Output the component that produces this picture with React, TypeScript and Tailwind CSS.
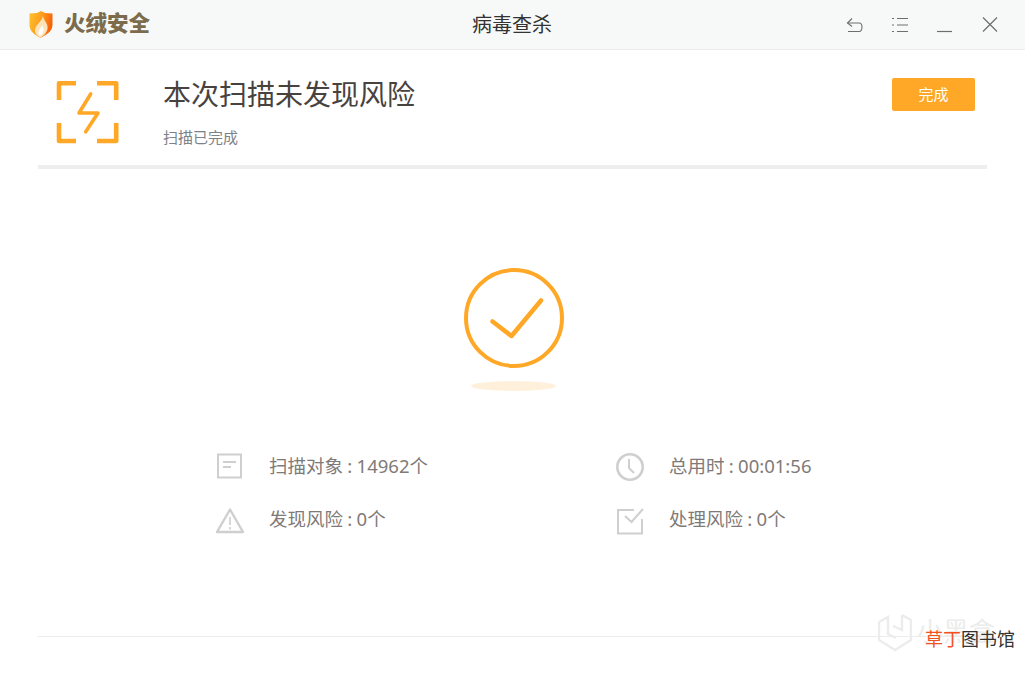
import React from "react";

const font = { fontFamily: '"Liberation Sans", "Noto Sans CJK SC", sans-serif' };
const statFont = { fontFamily: '"Noto Sans", "Noto Sans CJK SC", sans-serif' };

function Shield() {
  return (
    <svg width="24" height="27" viewBox="0 0 24 27">
      <defs>
        <linearGradient id="sg" x1="0" y1="0" x2="1" y2="0.3">
          <stop offset="0" stopColor="#fdc22e" />
          <stop offset="0.55" stopColor="#fc9d1c" />
          <stop offset="1" stopColor="#f7620c" />
        </linearGradient>
      </defs>
      <path d="M0.5 2.5 L8 2 L12 0 L16 2 L23.5 2.5 V14 C23.5 20.5 17 24 11.5 26.8 C6 24 0.5 20.5 0.5 14 Z" fill="url(#sg)" />
      <path d="M14 5 C14.5 9.5 19.5 12.5 18.5 18 C17.5 22.5 14 25 11.5 26.5 C7 24.5 5 21 6.5 16.5 C8 13 13 10 14 5 Z" fill="#fde2ba" />
      <path d="M13 13.5 C13.5 16.5 15.5 17.5 14.5 20.5 C14 22.5 12.5 24 10.5 25.2 C9 22.5 9.5 20 10.5 18.5 C11.5 17 13 15.5 13 13.5 Z" fill="#ffffff" />
    </svg>
  );
}

function ScanIcon() {
  return (
    <svg width="64" height="64" viewBox="0 0 64 64" fill="none" stroke="#ffa726" strokeLinejoin="round">
      <g strokeWidth="4.6">
        <path d="M20 3.2 H3 V20" />
        <path d="M41 3.2 H60.2 V20" />
        <path d="M3 43 V61 H20" />
        <path d="M60.2 43 V61 H41" />
      </g>
      <path d="M34.7 14 L23 33 H42 L29.7 51.7" strokeWidth="3.6" strokeLinecap="round" />
    </svg>
  );
}

function Stat({ icon, text }: { icon: React.ReactNode; text: string }) {
  return (
    <div className="flex items-center h-[53px]">
      <div className="w-[30px] h-[30px] flex items-center justify-center">{icon}</div>
      <span className="ml-[24px] mb-[4px] text-[18.5px] leading-[26px] text-[#7f7a78] whitespace-nowrap [word-spacing:-0.5px]" style={statFont}>{text}</span>
    </div>
  );
}

const Gray = "#cfcfcf";

export default function App() {
  return (
    <div className="relative w-[1025px] h-[675px] bg-white overflow-hidden flex flex-col" style={font}>
      <header className="h-[50px] shrink-0 bg-[#f7f9f8] border-b border-[#ebebeb] flex items-center relative">
        <div className="ml-[29px] flex items-center">
          <Shield />
          <span className="ml-[11px] mt-[1px] text-[21.5px] leading-none font-black text-[#7c6c4c]">火绒安全</span>
        </div>
        <div className="absolute left-0 right-0 top-[11px] leading-[28px] text-center text-[20px] text-[#333333] ml-[-1px]">病毒查杀</div>
        <div className="ml-auto flex items-center mr-[26px] mt-[1px] gap-[27px]">
          <svg width="18" height="18" viewBox="0 0 18 18" fill="none" stroke="#6e6e6e" strokeWidth="1.1">
            <path d="M6 2.5 L1.5 7 L6 10.5" />
            <path d="M1.5 7 H13 C15.5 7 16 9 16 11 C16 13 15 15.5 13 15.5 H2" />
          </svg>
          <svg width="18" height="18" viewBox="0 0 18 18" fill="none" stroke="#6e6e6e" strokeWidth="1.1">
            <path d="M1 2.5 H3 M6 2.5 H17 M1 9 H3 M6 9 H17 M1 15.5 H3 M6 15.5 H17" />
          </svg>
          <svg width="18" height="18" viewBox="0 0 18 18" fill="none" stroke="#6e6e6e" strokeWidth="1.2">
            <path d="M1 15.5 H16" />
          </svg>
          <svg width="18" height="18" viewBox="0 0 18 18" fill="none" stroke="#6e6e6e" strokeWidth="1.2">
            <path d="M2 1.5 L16 15.5 M16 1.5 L2 15.5" />
          </svg>
        </div>
      </header>

      <div className="mx-[38px] h-[119px] shrink-0 border-b-[4px] border-[#eeeeee] flex relative">
        <div className="ml-[18px] mt-[30px]">
          <ScanIcon />
        </div>
        <div className="ml-[43px]">
          <div className="mt-[25px] text-[28px] leading-[42px] text-[#48423f]">本次扫描未发现风险</div>
          <div className="mt-[11px] text-[15px] leading-[20px] text-[#7d8288]">扫描已完成</div>
        </div>
        <button className="ml-auto mr-[12px] mt-[28px] w-[83px] h-[33px] pt-[1px] bg-[#ffa726] rounded-[2px] text-white text-[15px]">完成</button>
      </div>

      <div className="flex flex-col items-center mt-[98px] ml-[2px] shrink-0">
        <svg width="102" height="102" viewBox="0 0 102 102" fill="none" stroke="#ffa726" strokeLinecap="round" strokeLinejoin="round">
          <circle cx="51" cy="51" r="48" strokeWidth="4" />
          <path d="M29.5 54.5 L48.5 69 L78 33.5" strokeWidth="4.5" />
        </svg>
        <div className="mt-[12px] w-[85px] h-[10px] rounded-[50%] bg-[#fef0da]" />
      </div>

      <div className="mt-[50px] ml-[215px] grid grid-cols-[400px_300px] shrink-0">
        <Stat
          text="扫描对象 : 14962个"
          icon={
            <svg width="27" height="27" viewBox="0 0 27 27" fill="none" stroke={Gray} strokeWidth="2" className="mb-[2px] mr-[2px]">
              <rect x="2" y="1.5" width="23" height="23" />
              <path d="M7 9 H20 M7 14 H15" />
            </svg>
          }
        />
        <Stat
          text="总用时 : 00:01:56"
          icon={
            <svg width="30" height="30" viewBox="0 0 30 30" fill="none" stroke={Gray} strokeWidth="2.6" className="mb-[1px]">
              <circle cx="15" cy="15" r="12.7" />
              <path d="M14 7 V16 L19 21" strokeWidth="2" />
            </svg>
          }
        />
        <Stat
          text="发现风险 : 0个"
          icon={
            <svg width="30" height="28" viewBox="0 0 30 28" fill="none" stroke={Gray} strokeWidth="2.4" strokeLinejoin="round">
              <path d="M15 2.5 L28 25 H2 Z" />
              <path d="M15 10 V18 M15 20 V22.5" strokeWidth="1.6" />
            </svg>
          }
        />
        <Stat
          text="处理风险 : 0个"
          icon={
            <svg width="28" height="28" viewBox="0 0 28 28" fill="none" stroke={Gray} strokeWidth="2">
              <path d="M18 3 H2 V26.5 H26 V12" />
              <path d="M9 9 L15.5 15 L27 2" />
            </svg>
          }
        />
      </div>

      <div className="mx-[38px] mt-[89px] border-t border-[#ececec] shrink-0" />

      <div className="absolute left-[878px] top-[612px] flex items-center text-[#ececec]">
        <svg width="34" height="40" viewBox="0 0 34 40" fill="none" stroke="#ececec" strokeWidth="2.4">
          <path d="M1 10 L10 5 V22 L18 26 M24 3 L33 8 V28 L17 38 L1 28 V10 M24 3 V18 L15 14" />
        </svg>
        <span className="ml-[5px] text-[26px] leading-none">小黑盒</span>
      </div>
      <div className="absolute left-[925px] top-[628px] text-[18px] leading-[24px] whitespace-nowrap">
        <span className="text-[#f4511e]">草丁</span>
        <span className="text-[#333333]">图书馆</span>
      </div>
    </div>
  );
}
